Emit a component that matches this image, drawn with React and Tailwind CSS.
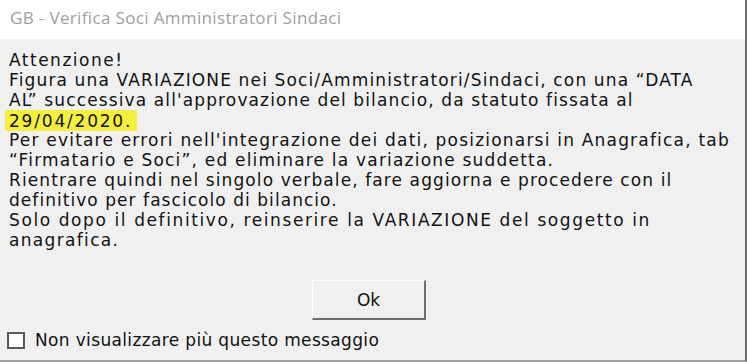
import React from "react";

const lines = [
  { t: "Attenzione!", ls: "tracking-[1.5px]" },
  { t: "Figura una VARIAZIONE nei Soci/Amministratori/Sindaci, con una \u201CDATA", ls: "tracking-[1.14px]" },
  { t: "AL\u201D successiva all'approvazione del bilancio, da statuto fissata al", ls: "tracking-[1.12px]" },
  null,
  { t: "Per evitare errori nell'integrazione dei dati, posizionarsi in Anagrafica, tab", ls: "tracking-[1.2px]" },
  { t: "\u201CFirmatario e Soci\u201D, ed eliminare la variazione suddetta.", ls: "tracking-[1.2px]" },
  { t: "Rientrare quindi nel singolo verbale, fare aggiorna e procedere con il", ls: "tracking-[1.1px]" },
  { t: "definitivo per fascicolo di bilancio.", ls: "tracking-[1.05px]" },
  { t: "Solo dopo il definitivo, reinserire la VARIAZIONE del soggetto in", ls: "tracking-[1.6px]" },
  { t: "anagrafica.", ls: "tracking-[1.33px]" },
];

export default function App() {
  return (
    <div className="w-[747px] h-[362px] flex flex-col overflow-hidden bg-white">
      <div
        className="h-[39px] shrink-0 bg-white pl-[10px] pt-[7px] text-[17px] leading-[22px] tracking-[0.35px] text-[#a0a0a0] border-r-2 border-[#6b6b6b]"
        style={{ fontFamily: '"Open Sans", "Noto Sans", sans-serif' }}
      >
        GB - Verifica Soci Amministratori Sindaci
      </div>
      <div
        className="flex-1 flex flex-col bg-[#f0f0f0] border-r-2 border-b-2 border-r-[#6b6b6b] border-b-[#a0a0a0] pl-[9px] pt-[11px] text-[17px] leading-[20px] text-[#121212]"
        style={{ fontFamily: '"DejaVu Sans", Verdana, sans-serif' }}
      >
        <div className="flex flex-col">
          {lines.map((l, i) =>
            l === null ? (
              <div key={i} className="h-[20px] whitespace-nowrap">
                <span className="inline-block bg-[#f3ef3c] -ml-[4px] pl-[4px] pr-[5px] pt-[2px] leading-[19px] tracking-[1.8px]">29/04/2020.</span>
              </div>
            ) : (
              <div key={i} className={"h-[20px] whitespace-nowrap " + l.ls}>{l.t}</div>
            )
          )}
        </div>
        <div className="mt-[30px] ml-[303px] w-[114px] h-[40px] flex items-center justify-center bg-[#f0f0f0] border-t border-l border-t-white border-l-white border-b-2 border-r-2 border-b-[#6e6e6e] border-r-[#6e6e6e] text-[17px]">
          Ok
        </div>
        <div className="mt-[10px] flex items-center -ml-[2px]">
          <div className="w-[18px] h-[17px] border-2 border-[#5a5a5a] bg-white"></div>
          <span className="ml-[10px] tracking-[0.35px] text-[#121212]">Non visualizzare più questo messaggio</span>
        </div>
      </div>
    </div>
  );
}
